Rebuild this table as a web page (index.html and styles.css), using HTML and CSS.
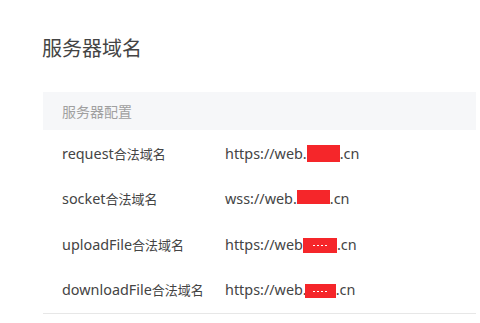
FILE: index.html
```html
<!DOCTYPE html>
<html lang="zh-CN">
<head>
<meta charset="utf-8">
<title>服务器域名</title>
<link rel="stylesheet" href="styles.css">
</head>
<body>
<div class="page">
  <h1 class="title">服务器域名</h1>
  <div class="panel">
    <div class="panel-head">服务器配置</div>
    <div class="rows">
      <div class="row">
        <span class="label">request<span class="cjk">合法域名</span></span>
        <span class="value">https://web.<span class="mask m1"></span>.cn</span>
      </div>
      <div class="row">
        <span class="label">socket<span class="cjk">合法域名</span></span>
        <span class="value">wss://web.<span class="mask m2"></span>.cn</span>
      </div>
      <div class="row">
        <span class="label">uploadFile<span class="cjk">合法域名</span></span>
        <span class="value">https://web<span class="mask m3 dashed"></span>.cn</span>
      </div>
      <div class="row">
        <span class="label">downloadFile<span class="cjk">合法域名</span></span>
        <span class="value">https://web.<span class="mask m4 dashed"></span>.cn</span>
      </div>
    </div>
  </div>
</div>
</body>
</html>
```

FILE: styles.css
```css
html, body {
  margin: 0;
  padding: 0;
  background: #ffffff;
}

body {
  font-family: "Noto Sans", "Noto Sans CJK SC", sans-serif;
  color: #444444;
}

.page {
  width: 433px;
  padding: 34px 0 0 43px;
}

.title {
  margin: 0 0 0 -1px;
  font-family: "Noto Sans CJK SC", sans-serif;
  font-weight: 400;
  font-size: 20px;
  line-height: 27px;
  color: #444444;
}

.panel {
  margin-top: 31px;
}

.panel-head {
  height: 38px;
  line-height: 38px;
  padding-left: 19px;
  background: #f6f7f9;
  font-family: "Noto Sans CJK SC", sans-serif;
  font-size: 14px;
  color: #a0a0a0;
}

.rows {
  padding-top: 1px;
  border-bottom: 1px solid #e7e7e7;
}

.row {
  display: grid;
  grid-template-columns: 163px 1fr;
  align-items: center;
  height: 45.5px;
  padding-left: 19px;
  font-size: 14.4px;
}

.label,
.value {
  white-space: nowrap;
  line-height: 20px;
}

.cjk {
  font-family: "Noto Sans CJK SC", sans-serif;
  font-size: 13px;
}

.mask {
  display: inline-block;
  background: #f5262a;
}

.dashed {
  background:
    repeating-linear-gradient(90deg, #ffffff 0 2px, transparent 2px 4px) center / 14px 1px no-repeat,
    #f5262a;
}

.m1 { width: 33px; height: 17px; vertical-align: -3px; }
.m2 { width: 33px; height: 14px; vertical-align: 0; }
.m3 { width: 34px; height: 15px; vertical-align: -3px; }
.m4 { width: 31px; height: 14px; vertical-align: -3px; margin-left: -2px; }
```
